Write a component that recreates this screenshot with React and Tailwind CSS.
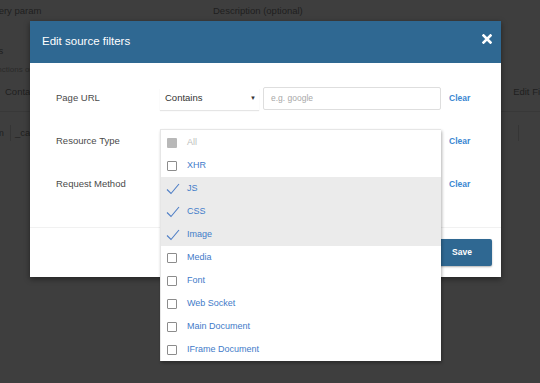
import { useState } from 'react';

const resourceTypes = [
  { label: 'All', state: 'all' },
  { label: 'XHR', state: 'off' },
  { label: 'JS', state: 'on' },
  { label: 'CSS', state: 'on' },
  { label: 'Image', state: 'on' },
  { label: 'Media', state: 'off' },
  { label: 'Font', state: 'off' },
  { label: 'Web Socket', state: 'off' },
  { label: 'Main Document', state: 'off' },
  { label: 'IFrame Document', state: 'off' },
];

const CheckMark = () => (
  <svg width="14" height="12" viewBox="0 0 14 12" className="ml-[-1px] mr-[-3px]">
    <polyline points="1,6.5 5,10.5 13,1" fill="none" stroke="#4f7fc6" strokeWidth="1.1" />
  </svg>
);

const ResourceRow = ({ item }) => {
  const checked = item.state === 'on';
  return (
    <div className={`flex h-[23px] items-center pl-[6px] ${checked ? 'bg-[#ebebeb]' : ''}`}>
      {checked ? (
        <CheckMark />
      ) : item.state === 'all' ? (
        <span className="h-[10px] w-[10px] rounded-[1px] bg-[#b8b8b8]" />
      ) : (
        <span className="h-[10px] w-[10px] rounded-[1px] border border-[#8c8c8c] bg-white" />
      )}
      <span
        className={`ml-[10px] text-[9px] ${item.state === 'all' ? 'text-[#bdbdbd]' : 'text-[#3f7bc9]'}`}
      >
        {item.label}
      </span>
    </div>
  );
};

const FilterRow = ({ label, children }) => (
  <div className="flex h-[43px] items-center">
    <span className="w-[104px] text-[9.5px] text-[#4a4a4a]">{label}</span>
    <div className="flex h-full w-[281px] items-center">{children}</div>
    <button type="button" className="ml-[8px] text-[8.5px] font-semibold text-[#3b87d2]">
      Clear
    </button>
  </div>
);

export default function App() {
  const [items] = useState(resourceTypes);

  return (
    <div
      className="relative h-[383px] w-[540px] overflow-hidden bg-[#3e3e3e] text-[#1e1e1e]"
      style={{ fontFamily: '"Liberation Sans", Arial, sans-serif' }}
    >
      {/* page behind the overlay */}
      <div className="flex h-[22px] items-center text-[9.5px]">
        <span className="ml-[-14px] w-[227px]">Query param</span>
        <span>Description (optional)</span>
      </div>
      <div className="flex flex-col">
        <div className="mt-[22px] h-[14px] text-[9.5px] leading-[14px]">
          <span className="ml-[-38px]">Functions</span>
        </div>
        <div className="mt-[5px] h-[14px] text-[8px] leading-[14px] text-[#2a2a2a]">
          <span className="ml-[-12px]">Functions ordering</span>
        </div>
        <div className="mt-[8px] flex h-[14px] items-center justify-between text-[9.5px]">
          <span className="ml-[5px]">Contains</span>
          <span className="mr-[-18px]">Edit Filters</span>
        </div>
        <div className="mt-[12px] flex h-[1px] bg-[#383838]" />
        <div className="mt-[13px] flex h-[16px] items-center justify-between text-[9.5px]">
          <div className="flex h-full items-center">
            <span className="ml-[-4px]">m</span>
            <span className="ml-[6px] h-full w-px bg-[#353535]" />
            <span className="ml-[4px]">_calls</span>
          </div>
          <span className="mr-[21px] h-full w-px bg-[#353535]" />
        </div>
      </div>

      {/* modal */}
      <div className="absolute left-[30px] top-[21px] flex h-[256px] w-[471px] flex-col bg-white shadow-[0_2px_6px_rgba(0,0,0,0.45)]">
        <div className="flex h-[42px] items-center justify-between bg-[#2f6892] pl-[12px] pr-[9px] text-white">
          <h2 className="text-[11.5px]">Edit source filters</h2>
          <svg width="10" height="10" viewBox="0 0 10 10" className="mt-[-6px]">
            <path d="M1.5 1.5 L8.5 8.5 M8.5 1.5 L1.5 8.5" stroke="white" strokeWidth="2.6" strokeLinecap="square" />
          </svg>
        </div>

        <div className="relative flex-1 pl-[26px] pt-[14px]">
          <FilterRow label="Page URL">
            <div className="flex h-[22px] w-[99px] items-center justify-between pl-[5px] pr-[3px] text-[9.5px] text-[#333] shadow-[0_1px_1px_rgba(0,0,0,0.1)]">
              <span>Contains</span>
              <span className="text-[6px]">▼</span>
            </div>
            <div className="ml-[4px] flex h-[23px] flex-1 items-center rounded-[2px] border border-[#dedede] pl-[7px] text-[8.5px] text-[#a8a8a8]">
              e.g. google
            </div>
          </FilterRow>
          <FilterRow label="Resource Type" />
          <FilterRow label="Request Method" />

          {/* open resource type list */}
          <div className="absolute left-[130px] top-[66px] z-10 w-[281px] border-l border-t border-[#e6e6e6] bg-white pt-[1px] shadow-[1px_2px_3px_rgba(0,0,0,0.3)]">
            {items.map((item) => (
              <ResourceRow key={item.label} item={item} />
            ))}
          </div>
        </div>

        <div className="flex h-[50px] items-center justify-end border-t border-[#f1f1f1] pr-[9px]">
          <button
            type="button"
            className="h-[27px] w-[60px] rounded-[2px] bg-[#2f6892] text-[8.5px] font-semibold text-white shadow-[0_1px_2px_rgba(0,0,0,0.3)]"
          >
            Save
          </button>
        </div>
      </div>
    </div>
  );
}
